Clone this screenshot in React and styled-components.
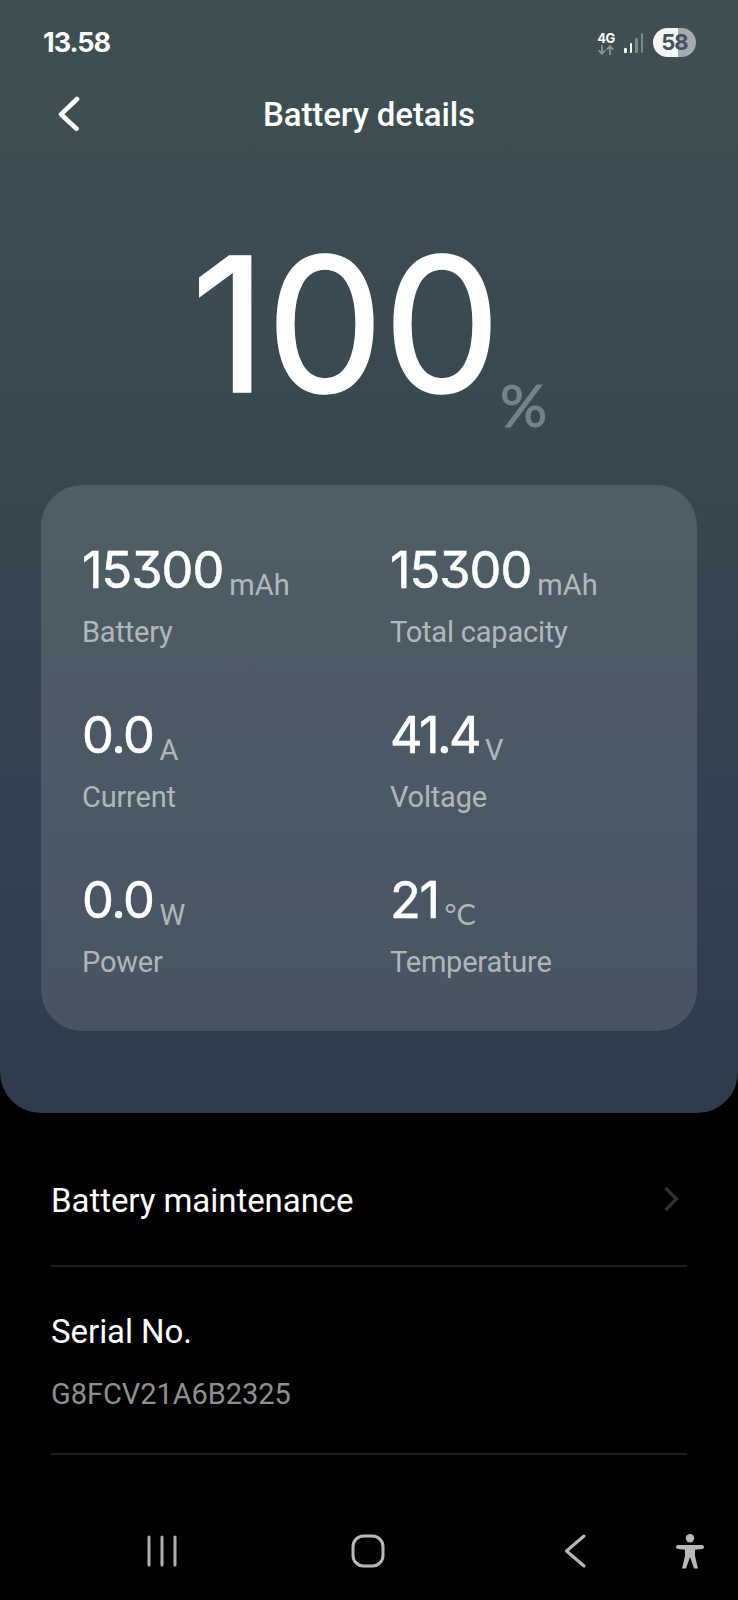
import React from 'react'
import styled, { createGlobalStyle } from 'styled-components'

const GlobalStyle = createGlobalStyle`
  * {
    box-sizing: border-box;
  }

  body {
    margin: 0;
    background: #000;
    color: #fff;
    font-family: Roboto, sans-serif;
  }
`

const Screen = styled.div`
  display: flex;
  flex-direction: column;
  width: 738px;
  height: 1600px;
  overflow: hidden;
  background: #000;
`

const Hero = styled.section`
  height: 1113px;
  border-radius: 0 0 41px 41px;
  background: linear-gradient(#3f4f52 0%, #3d4c52 20%, #37474f 45%, #334250 70%, #2d3b4b 100%);
`

const StatusBar = styled.div`
  display: flex;
  align-items: center;
  height: 85px;
  padding: 0 42px 0 43px;
`

const Clock = styled.div`
  flex: 1;
  font-family: Inter, sans-serif;
  font-size: 27px;
  font-weight: 700;
  line-height: 32px;
  letter-spacing: -1px;
`

const Network = styled.div`
  display: flex;
  flex-direction: column;
  align-items: center;
  width: 20px;
  margin: 1px 8px 0 0;
  font-family: Inter, sans-serif;
  font-size: 13px;
  font-weight: 700;
  line-height: 13px;
  letter-spacing: -0.4px;
`

const Signal = styled.div`
  display: flex;
  align-items: flex-end;
  gap: 3px;
  margin-right: 10px;
`

const SignalBar = styled.span`
  width: 2.5px;
  height: ${props => props.size}px;
  border-radius: 1px;
  background: ${props => (props.$on ? '#fff' : '#7c888b')};
`

const BatteryPill = styled.div`
  width: 43px;
  height: 29px;
  border-radius: 15px;
  background: linear-gradient(90deg, #f3f6f7 58%, #a3abae 58%);
  color: #445257;
  font-family: Inter, sans-serif;
  font-size: 22px;
  font-weight: 700;
  line-height: 28px;
  letter-spacing: -1px;
  text-align: center;
`

const Header = styled.header`
  display: grid;
  grid-template-columns: 60px 1fr 60px;
  align-items: center;
  height: 60px;
  padding: 0 40px;
`

const BackButton = styled.a`
  display: flex;
  padding: 0 0 2px 17px;
`

const Title = styled.h1`
  margin: 0;
  font-size: 33px;
  font-weight: 500;
  line-height: 40px;
  letter-spacing: -0.1px;
  text-align: center;
`

const Charge = styled.div`
  display: flex;
  align-items: flex-end;
  height: 340px;
  padding: 0 0 40px 191px;
`

const ChargeValue = styled.span`
  margin-bottom: 7px;
  font-family: Inter, sans-serif;
  font-size: 187px;
  font-weight: 400;
  line-height: 228px;
  letter-spacing: -1px;
  -webkit-text-stroke: 1.4px #fff;
`

const ChargeUnit = styled.span`
  margin-bottom: 5px;
  color: #76828a;
  font-family: Lato, sans-serif;
  font-size: 59px;
  line-height: 70px;
  -webkit-text-stroke: 1px #76828a;
`

const Panel = styled.div`
  display: grid;
  grid-template-columns: 308px 1fr;
  row-gap: 56px;
  height: 546px;
  margin: 0 41px;
  padding: 55px 0 0 41px;
  align-content: start;
  border-radius: 41px;
  background: rgba(255, 255, 255, 0.12);
`

const Reading = styled.div`
  display: flex;
  height: 62px;
`

const Value = styled.span`
  font-family: Inter, sans-serif;
  font-size: 50.5px;
  font-weight: 400;
  line-height: 60px;
  letter-spacing: ${props => props.$tracking}px;
  font-feature-settings: 'cv09' 1;
  -webkit-text-stroke: 0.6px #fff;
`

const Unit = styled.span`
  align-self: flex-end;
  margin-left: 6px;
  margin-bottom: ${props => (props.$round ? 1 : 0)}px;
  color: rgba(255, 255, 255, 0.58);
  font-family: ${props => (props.$round ? 'Lato' : 'Roboto')}, sans-serif;
  font-size: 29px;
  line-height: 34px;
`

const Label = styled.div`
  margin-top: 13px;
  color: rgba(255, 255, 255, 0.58);
  font-size: 29px;
  line-height: 34px;
  letter-spacing: -0.2px;
`

const List = styled.div`
  flex: 1;
  padding: 0 51px;
`

const Item = styled.div`
  display: flex;
  align-items: center;
  justify-content: space-between;
  height: ${props => props.$height}px;
  padding-top: ${props => props.$offset}px;
  border-bottom: 2px solid #1e1e1e;
`

const ItemTitle = styled.div`
  font-size: 33px;
  line-height: 40px;
  letter-spacing: -0.05px;
`

const ItemDetail = styled.div`
  margin-top: 25px;
  color: #8f8f8f;
  font-size: 29px;
  line-height: 34px;
  letter-spacing: -0.05px;
`

const ChevronIcon = styled.svg`
  margin-bottom: 4px;
`

const NavBar = styled.nav`
  display: grid;
  grid-template-columns: 204px 213px 112px 28px;
  align-items: center;
  height: 98px;
  padding-left: 147px;
`

const readings = [
  { value: '15300', unit: 'mAh', label: 'Battery', tracking: -1 },
  { value: '15300', unit: 'mAh', label: 'Total capacity', tracking: -1 },
  { value: '0.0', unit: 'A', label: 'Current', tracking: -1.4 },
  { value: '41.4', unit: 'V', label: 'Voltage', tracking: -2.6 },
  { value: '0.0', unit: 'W', label: 'Power', tracking: -1.4 },
  { value: '21', unit: '°C', label: 'Temperature', tracking: -1.4 }
]

const App = () => {
  return (
    <Screen>
      <GlobalStyle />
      <Hero>
        <StatusBar>
          <Clock>13.58</Clock>
          <Network>
            4G
            <svg width="16" height="10" viewBox="0 0 16 10" fill="none" stroke="#8b9699" strokeWidth="1.7">
              <path d="M4 0v8.5M.7 5.4 4 8.8l3.3-3.4M12 10V1.5M8.7 4.6 12 1.2l3.3 3.4" />
            </svg>
          </Network>
          <Signal>
            <SignalBar size={5} $on />
            <SignalBar size={10} $on />
            <SignalBar size={15} />
            <SignalBar size={20} />
          </Signal>
          <BatteryPill>58</BatteryPill>
        </StatusBar>
        <Header>
          <BackButton>
            <svg width="24" height="36" viewBox="0 0 24 36" fill="none" stroke="#fff" strokeWidth="4.6" strokeLinecap="round" strokeLinejoin="round">
              <path d="M20 3 4 18.3l15.500 14.500" />
            </svg>
          </BackButton>
          <Title>Battery details</Title>
        </Header>
        <Charge>
          <ChargeValue>100</ChargeValue>
          <ChargeUnit>%</ChargeUnit>
        </Charge>
        <Panel>
          {readings.map(reading => (
            <div key={reading.label}>
              <Reading>
                <Value $tracking={reading.tracking}>{reading.value}</Value>
                <Unit $round={reading.unit === '°C'}>{reading.unit}</Unit>
              </Reading>
              <Label>{reading.label}</Label>
            </div>
          ))}
        </Panel>
      </Hero>
      <List>
        <Item $height={154} $offset={24}>
          <ItemTitle>Battery maintenance</ItemTitle>
          <ChevronIcon width="24" height="30" viewBox="0 0 24 30" fill="none" stroke="#303030" strokeWidth="3.2">
            <path d="m2.5 4 11 11-11 11" />
          </ChevronIcon>
        </Item>
        <Item $height={188} $offset={3}>
          <div>
            <ItemTitle>Serial No.</ItemTitle>
            <ItemDetail>G8FCV21A6B2325</ItemDetail>
          </div>
        </Item>
      </List>
      <NavBar>
        <svg width="30" height="34" viewBox="0 0 30 34" stroke="#b0b0b0" strokeWidth="3" strokeLinecap="round">
          <path d="M2 3v28M15 3v28M28 3v28" />
        </svg>
        <svg width="34" height="34" viewBox="0 0 34 34" fill="none" stroke="#b8b8b8" strokeWidth="3">
          <rect x="2" y="2" width="30" height="30" rx="10.5" />
        </svg>
        <svg width="24" height="34" viewBox="0 0 24 34" fill="none" stroke="#b8b8b8" strokeWidth="3" strokeLinecap="round" strokeLinejoin="round">
          <path d="M20 2 2.5 17 20 32" />
        </svg>
        <svg width="28" height="35" viewBox="0 0 28 35" fill="#b8b8b8">
          <circle cx="14" cy="4.2" r="4.2" />
          <path d="M2 11h24a2 2 0 0 1 0 4l-7 .8v6.2l3 12.5h-4L14 23l-4 11.5H6l3-12.5v-6.2L2 15a2 2 0 0 1 0-4Z" />
        </svg>
      </NavBar>
    </Screen>
  )
}

export default App
